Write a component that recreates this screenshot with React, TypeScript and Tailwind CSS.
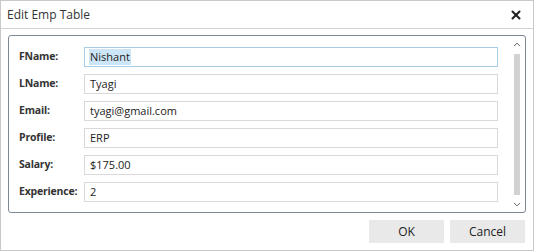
import { ChevronDown, ChevronUp, X } from "lucide-react";

type Field = {
  label: string;
  value: string;
};

const fields: Field[] = [
  { label: "FName:", value: "Nishant" },
  { label: "LName:", value: "Tyagi" },
  { label: "Email:", value: "tyagi@gmail.com" },
  { label: "Profile:", value: "ERP" },
  { label: "Salary:", value: "$175.00" },
  { label: "Experience:", value: "2" },
];

const FieldRow = ({ field, focused }: { field: Field; focused?: boolean }) => {
  return (
    <div className="flex items-center h-[20px]">
      <label className="w-[65px] shrink-0 font-bold text-[10.5px] tracking-[-0.2px] text-[#333]">
        {field.label}
      </label>
      <div
        className={`flex items-center flex-1 h-[20px] px-[4px] border bg-white text-[11px] text-[#222] ${
          focused ? "border-[#a8cbe6]" : "border-[#d9d9d9]"
        }`}
      >
        <span className={focused ? "bg-[#cde6f7] px-[1px]" : "px-[1px]"}>
          {field.value}
        </span>
      </div>
    </div>
  );
};

export default function App() {
  return (
    <div
      className="w-[534px] h-[251px] bg-white border border-[#c9c9c9] flex flex-col"
      style={{ fontFamily: '"Open Sans", "Noto Sans", sans-serif' }}
    >
      <div className="h-[28px] shrink-0 flex items-center justify-between pl-[6px] pr-[10px] border-b border-[#d2d2d2]">
        <span className="text-[12px] text-[#333]">Edit Emp Table</span>
        <X className="w-[14px] h-[14px] text-[#222]" strokeWidth={3.5} />
      </div>

      <div className="flex-1 flex flex-col px-[7px] pt-[6px] pb-[6px]">
        <div className="flex h-[178px] border border-[#7d8a96] rounded-[3px] pl-[10px] pr-[1px]">
          <div className="flex-1 flex flex-col gap-[7px] pt-[11px]">
            {fields.map((field, i) => (
              <FieldRow key={field.label} field={field} focused={i === 0} />
            ))}
          </div>
          <div className="w-[14px] ml-[12px] flex flex-col items-center pt-[3px] pb-[2px]">
            <ChevronUp className="w-[12px] h-[11px] text-[#555]" strokeWidth={2} />
            <div className="flex-1 w-[6px] bg-[#d2d2d2] my-[4px]" />
            <ChevronDown className="w-[12px] h-[11px] text-[#555]" strokeWidth={2} />
          </div>
        </div>

        <div className="flex justify-end gap-[6px] mt-[7px] pr-[1px]">
          <button className="w-[75px] h-[23px] bg-[#e9e9e9] text-[12px] text-[#222]">
            OK
          </button>
          <button className="w-[75px] h-[23px] bg-[#e9e9e9] text-[12px] text-[#222]">
            Cancel
          </button>
        </div>
      </div>
    </div>
  );
}
